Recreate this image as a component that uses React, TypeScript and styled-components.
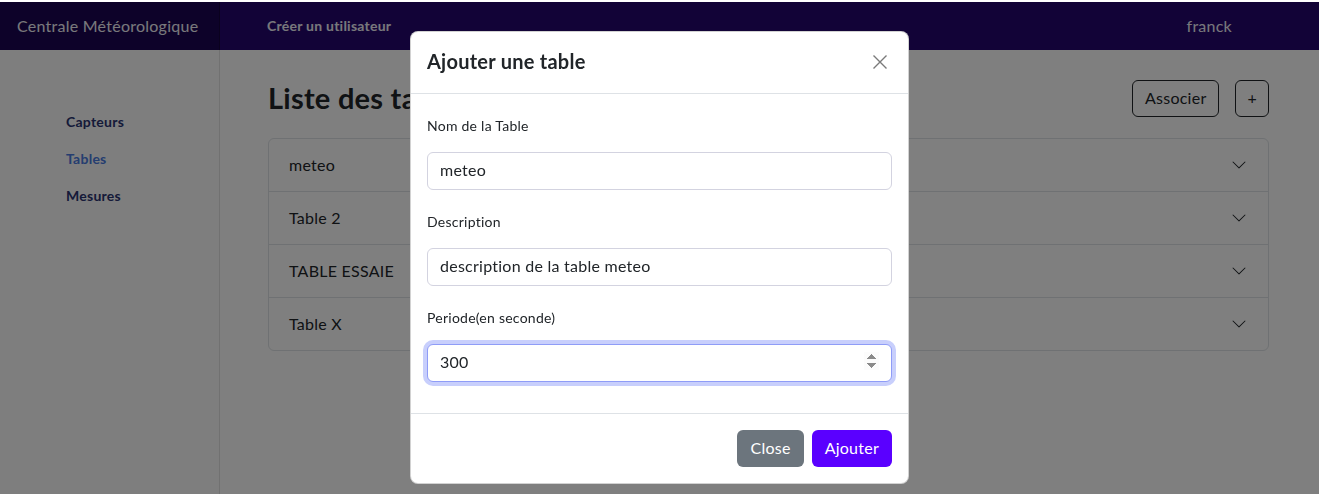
import React from "react";
import styled, { createGlobalStyle } from "styled-components";

const GlobalStyle = createGlobalStyle`
  * { box-sizing: border-box; }
  html, body { margin: 0; padding: 0; }
  body {
    font-family: Lato, "Noto Sans", "Liberation Sans", sans-serif;
    letter-spacing: 0.25px;
    background: #ffffff;
    color: #212529;
    overflow: hidden;
  }
  button, input { letter-spacing: 0.25px; }
  input[type=number]::-webkit-inner-spin-button { opacity: 1; }
`;

const Page = styled.div`
  padding-top: 2px;
  height: 494px;
  display: flex;
  flex-direction: column;
`;

const Navbar = styled.header`
  height: 48px;
  display: flex;
  align-items: stretch;
  background: #24066e;
  flex-shrink: 0;
`;

const Brand = styled.div`
  width: 220px;
  display: flex;
  align-items: center;
  padding: 0 0 2px 17px;
  font-size: 16px;
  color: #f2f2f8;
  background: rgba(0, 0, 0, 0.25);
  box-shadow: inset -1px 0 0 rgba(0, 0, 0, 0.25);
`;

const NavLink = styled.a`
  display: flex;
  align-items: center;
  padding: 0 0 2px 47px;
  font-size: 14px;
  font-weight: 700;
  color: #f0f0f8;
  text-decoration: none;
`;

const NavUser = styled.div`
  margin-left: auto;
  padding: 0 87px 2px 0;
  display: flex;
  align-items: center;
  font-size: 16px;
  color: #f0f0f8;
`;

const Body = styled.div`
  flex: 1;
  display: flex;
`;

const Sidebar = styled.nav`
  width: 220px;
  border-right: 1px solid #e2e2e2;
  padding: 53px 0 0 50px;
  display: flex;
  flex-direction: column;
  background: #fdfdfd;
`;

const SideLink = styled.a<{ $active?: boolean }>`
  display: block;
  padding: 8px 16px;
  font-size: 14px;
  line-height: 21px;
  font-weight: 700;
  color: ${(p) => (p.$active ? "#4a7be0" : "#2a3472")};
  text-decoration: none;
`;

const Main = styled.main`
  flex: 1;
  padding: 30px 50px 0 48px;
`;

const TitleRow = styled.div`
  height: 37px;
  display: flex;
  align-items: center;
  gap: 16px;
  margin-bottom: 21px;
`;

const Title = styled.h2`
  margin: 0 auto 2px 0;
  font-size: 29px;
  font-weight: 700;
  color: #212529;
`;

const OutlineButton = styled.button<{ $compact?: boolean }>`
  height: 37px;
  padding: ${(p) => (p.$compact ? "0 11px 2px" : "0 12px 2px")};
  border: 1px solid #212529;
  border-radius: 6px;
  background: transparent;
  font-family: inherit;
  font-size: 16px;
  color: #212529;
`;

const Accordion = styled.div`
  border: 1px solid #dee2e6;
  border-radius: 6px;
  overflow: hidden;
`;

const AccordionItem = styled.div`
  height: 52px;
  padding: 0 21px 2px 20px;
  display: flex;
  align-items: center;
  justify-content: space-between;
  font-size: 16px;
  color: #212529;
  & + & { border-top: 1px solid #dee2e6; height: 53px; }
  svg { margin-top: 2px; }
`;

const Backdrop = styled.div`
  position: fixed;
  inset: 2px 0 0 0;
  background: rgba(0, 0, 0, 0.5);
  display: flex;
  justify-content: center;
  align-items: flex-start;
`;

const Modal = styled.div`
  margin-top: 29px;
  width: 499px;
  background: #fff;
  border: 1px solid rgba(0, 0, 0, 0.175);
  border-radius: 8px;
  display: flex;
  flex-direction: column;
`;

const ModalHeader = styled.div`
  height: 62px;
  padding: 0 16px;
  display: flex;
  align-items: center;
  justify-content: space-between;
  border-bottom: 1px solid #dee2e6;
`;

const ModalTitle = styled.h5`
  margin: 0 0 3px;
  font-size: 20px;
  font-weight: 700;
  color: #212529;
`;

const CloseButton = styled.button`
  width: 24px;
  height: 24px;
  padding: 0;
  border: 0;
  background: transparent;
  display: flex;
  align-items: center;
  justify-content: center;
  margin-bottom: 2px;
`;

const ModalBody = styled.div`
  padding: 20px 16px 31px;
  display: flex;
  flex-direction: column;
  gap: 20px;
`;

const Field = styled.div`
  display: flex;
  flex-direction: column;
`;

const Label = styled.label`
  font-size: 14px;
  line-height: 24px;
  margin-bottom: 14px;
  color: #212529;
`;

const Input = styled.input`
  height: 38px;
  padding: 4px 12px 8px;
  border: 1px solid #d3d3e0;
  border-radius: 6px;
  font-family: inherit;
  font-size: 16px;
  color: #212529;
  outline: none;
  &:focus {
    border-color: #8f9cf7;
    box-shadow: 0 0 0 4px #c8cffc;
  }
`;

const ModalFooter = styled.div`
  border-top: 1px solid #dee2e6;
  padding: 16px;
  display: flex;
  justify-content: flex-end;
  gap: 8px;
`;

const SolidButton = styled.button<{ $variant: "secondary" | "primary" }>`
  height: 37px;
  padding: 0 13px 2px;
  border: 0;
  border-radius: 6px;
  font-family: inherit;
  font-size: 16px;
  color: #fff;
  background: ${(p) => (p.$variant === "primary" ? "#5a00ff" : "#6c757d")};
`;

const Chevron = () => (
  <svg width="16" height="16" viewBox="0 0 16 16" fill="#212529">
    <path
      fillRule="evenodd"
      d="M1.646 4.646a.5.5 0 0 1 .708 0L8 10.293l5.646-5.647a.5.5 0 0 1 .708.708l-6 6a.5.5 0 0 1-.708 0l-6-6a.5.5 0 0 1 0-.708z"
    />
  </svg>
);

const XIcon = () => (
  <svg width="16" height="16" viewBox="0 0 16 16">
    <path d="M1.5 1.5 L14.5 14.5 M14.5 1.5 L1.5 14.5" stroke="#7a7a7a" strokeWidth="1.4" />
  </svg>
);

const tables = ["meteo", "Table 2", "TABLE ESSAIE", "Table X"];

export default function App() {
  return (
    <>
      <GlobalStyle />
      <Page>
        <Navbar>
          <Brand>Centrale Météorologique</Brand>
          <NavLink href="#">Créer un utilisateur</NavLink>
          <NavUser>franck</NavUser>
        </Navbar>
        <Body>
          <Sidebar>
            <SideLink href="#">Capteurs</SideLink>
            <SideLink href="#" $active>
              Tables
            </SideLink>
            <SideLink href="#">Mesures</SideLink>
          </Sidebar>
          <Main>
            <TitleRow>
              <Title>Liste des tables</Title>
              <OutlineButton>Associer</OutlineButton>
              <OutlineButton $compact>+</OutlineButton>
            </TitleRow>
            <Accordion>
              {tables.map((t) => (
                <AccordionItem key={t}>
                  <span>{t}</span>
                  <Chevron />
                </AccordionItem>
              ))}
            </Accordion>
          </Main>
        </Body>
      </Page>
      <Backdrop>
        <Modal>
          <ModalHeader>
            <ModalTitle>Ajouter une table</ModalTitle>
            <CloseButton aria-label="Close">
              <XIcon />
            </CloseButton>
          </ModalHeader>
          <ModalBody>
            <Field>
              <Label>Nom de la Table</Label>
              <Input defaultValue="meteo" />
            </Field>
            <Field>
              <Label>Description</Label>
              <Input defaultValue="description de la table meteo" />
            </Field>
            <Field>
              <Label>Periode(en seconde)</Label>
              <Input type="number" defaultValue={300} autoFocus />
            </Field>
          </ModalBody>
          <ModalFooter>
            <SolidButton $variant="secondary">Close</SolidButton>
            <SolidButton $variant="primary">Ajouter</SolidButton>
          </ModalFooter>
        </Modal>
      </Backdrop>
    </>
  );
}
